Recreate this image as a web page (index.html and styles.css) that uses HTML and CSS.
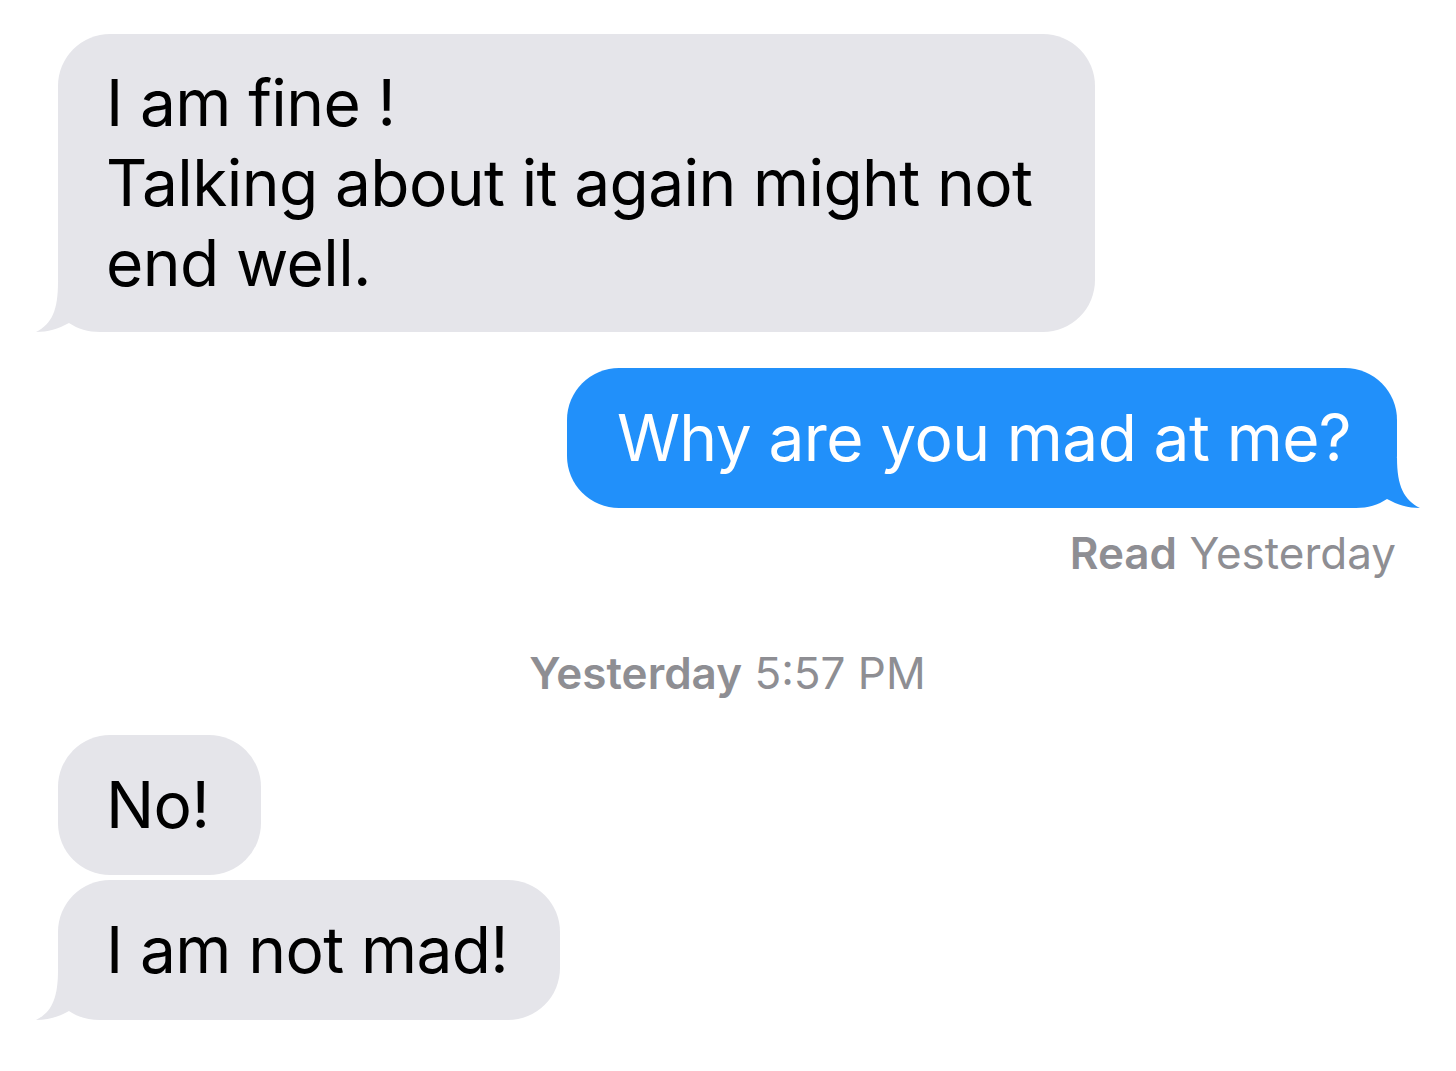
FILE: index.html
```
<!DOCTYPE html>
<html lang="en">
<head>
  <meta charset="UTF-8">
  <meta name="viewport" content="width=device-width, initial-scale=1.0">
  <title>Messages</title>
  <link rel="stylesheet" href="styles.css">
</head>
<body>
  <div class="thread">
    <div class="row them">
      <div class="bubble gray wide">
        I am fine !<br>Talking about it again might not<br>end well.
        <svg class="tail tail-left" viewBox="0 0 90 50"><path d="M22 0 C22 28 16 42 0 50 C12 50 22 47 33 41 C42 47 52 50 64 50 L90 50 L90 0 Z"/></svg>
      </div>
    </div>

    <div class="row me">
      <div class="bubble blue">
        Why are you mad at me?
        <svg class="tail tail-right" viewBox="0 0 90 50"><path d="M67 0 C67 28 74 42 90 50 C78 50 68 47 57 41 C48 47 38 50 26 50 L0 50 L0 0 Z"/></svg>
      </div>
    </div>
    <div class="receipt"><strong>Read</strong> Yesterday</div>

    <div class="stamp"><strong>Yesterday</strong> 5:57 PM</div>

    <div class="row them">
      <div class="bubble gray">No!</div>
    </div>
    <div class="row them">
      <div class="bubble gray">
        I am not mad!
        <svg class="tail tail-left" viewBox="0 0 90 50"><path d="M22 0 C22 28 16 42 0 50 C12 50 22 47 33 41 C42 47 52 50 64 50 L90 50 L90 0 Z"/></svg>
      </div>
    </div>
  </div>
</body>
</html>
```

FILE: styles.css
```
body {
  margin: 0;
  background: #fff;
  font-family: Inter, "Open Sans", sans-serif;
}
.thread {
  display: flex;
  flex-direction: column;
  padding: 34px 59px 0 58px;
}
.row {
  display: flex;
}
.row.me {
  justify-content: flex-end;
  margin-top: 36px;
}
.row.them + .row.them {
  margin-top: 5px;
}
.bubble {
  position: relative;
  isolation: isolate;
  padding: 30px 52px 30px 48px;
  border-radius: 52px;
  font-size: 64px;
  line-height: 80px;
  letter-spacing: -0.6px;
}
.bubble.wide {
  padding-top: 29px;
  padding-bottom: 29px;
  padding-right: 63px;
}
.gray {
  background: #e5e5ea;
  color: #000;
}
.blue {
  background: #2190fa;
  color: #fff;
  padding-left: 50px;
  padding-right: 46px;
}
.tail {
  position: absolute;
  z-index: -1;
  bottom: 0;
  width: 90px;
  height: 50px;
}
.tail-left {
  left: -22px;
}
.tail-left path {
  fill: #e5e5ea;
}
.tail-right {
  right: -23px;
}
.tail-right path {
  fill: #2190fa;
}
.receipt {
  text-align: right;
  padding-right: 1px;
  margin-top: 17px;
  font-size: 44px;
  line-height: 56px;
  color: #8e8e93;
}
.stamp {
  text-align: center;
  margin-top: 64px;
  margin-bottom: 34px;
  font-size: 44px;
  line-height: 56px;
  color: #8e8e93;
}
.receipt strong,
.stamp strong {
  font-weight: 600;
}
```
